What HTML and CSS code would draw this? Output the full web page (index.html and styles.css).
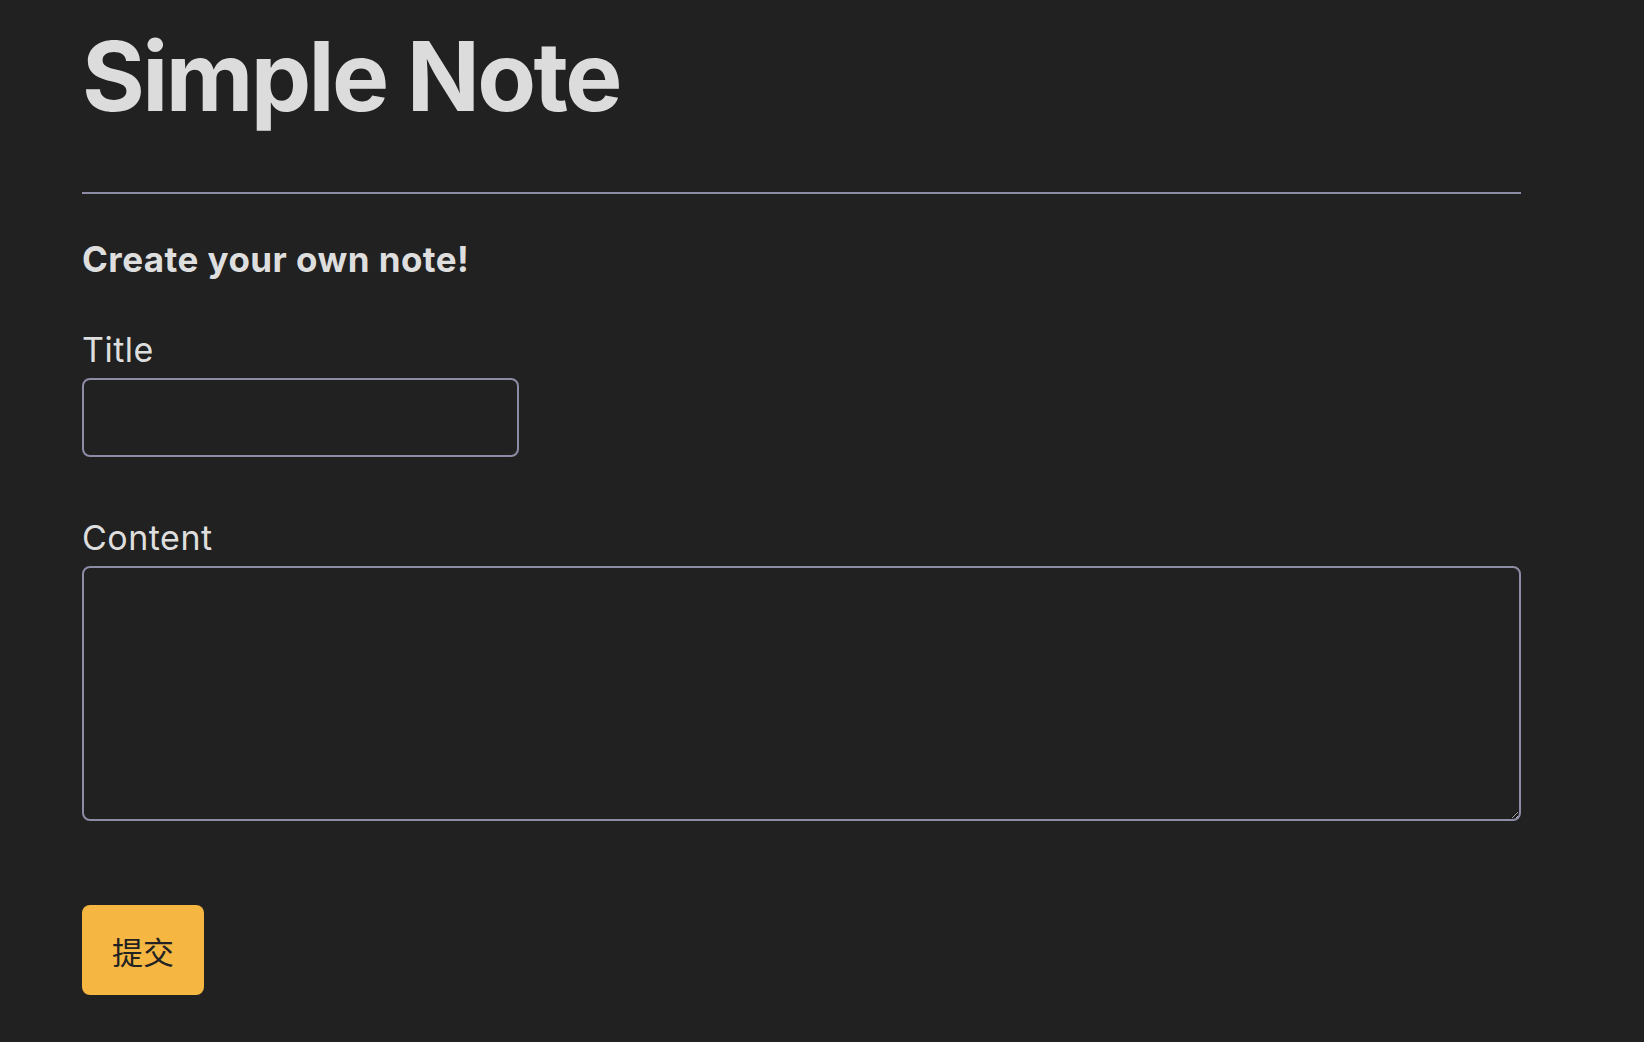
FILE: index.html
```html
<!DOCTYPE html>
<html lang="en">
<head>
<meta charset="utf-8">
<title>Simple Note</title>
<link rel="stylesheet" href="styles.css">
</head>
<body>
<main class="page">
  <h1 class="title">Simple Note</h1>
  <hr class="rule">
  <h2 class="subtitle">Create your own note!</h2>
  <form class="note-form">
    <label class="field-label" for="title">Title</label>
    <input class="title-input" id="title" type="text">
    <label class="field-label content-label" for="content">Content</label>
    <textarea class="content-input" id="content"></textarea>
    <button class="submit" type="button">提交</button>
  </form>
</main>
</body>
</html>
```

FILE: styles.css
```css
html, body {
  margin: 0;
  padding: 0;
  background: #212121;
}

body {
  font-family: Inter, "Noto Sans", sans-serif;
  color: #dedede;
}

.page {
  width: 1439px;
  padding: 28px 0 0 82px;
  display: flex;
  flex-direction: column;
}

.title {
  margin: 0;
  font-size: 96px;
  line-height: 96px;
  font-weight: 700;
  letter-spacing: -2.6px;
  color: #dcdcdc;
}

.rule {
  margin: 68px 0 0 0;
  border: 0;
  height: 2px;
  background: #8c8ca6;
  width: 100%;
}

.subtitle {
  margin: 48px 0 0 0;
  font-size: 35px;
  line-height: 35px;
  font-weight: 700;
  letter-spacing: 0.45px;
  color: #dedede;
}

.note-form {
  display: flex;
  flex-direction: column;
  align-items: flex-start;
}

.field-label {
  margin-top: 56px;
  font-size: 34px;
  line-height: 34px;
  font-weight: 400;
  letter-spacing: 0.5px;
  color: #dedede;
}

.content-label {
  margin-top: 64px;
}

.title-input {
  margin-top: 11px;
  box-sizing: border-box;
  width: 437px;
  height: 79px;
  border: 2px solid #8c8ca6;
  border-radius: 8px;
  background: transparent;
  color: #dedede;
  font: 28px Inter, sans-serif;
  padding: 0 14px;
  outline: none;
}

.content-input {
  margin-top: 11px;
  box-sizing: border-box;
  width: 1439px;
  height: 255px;
  border: 2px solid #8c8ca6;
  border-radius: 8px;
  background: transparent;
  color: #dedede;
  font: 28px Inter, sans-serif;
  padding: 10px 14px;
  outline: none;
  color-scheme: dark;
}

.submit {
  margin-top: 84px;
  width: 122px;
  height: 90px;
  border: 0;
  border-radius: 8px;
  background: #f5b642;
  color: #222222;
  font-family: "Noto Sans CJK SC", sans-serif;
  font-size: 31px;
  padding: 0;
  display: flex;
  align-items: center;
  justify-content: center;
}
```
